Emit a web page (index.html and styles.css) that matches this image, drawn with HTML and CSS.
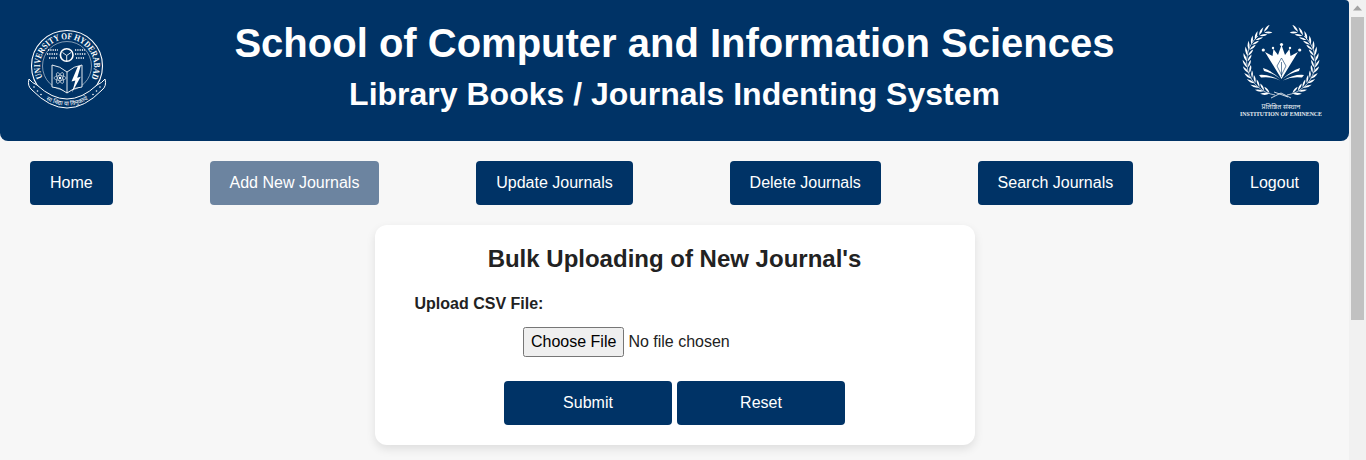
FILE: index.html
```html
<!DOCTYPE html>
<html lang="en">
<head>
  <meta charset="UTF-8" />
  <meta name="viewport" content="width=device-width, initial-scale=1.0"/>
  <title>Add New Journals</title>
  <link rel="stylesheet" href="styles.css">
</head>
<body>
  <div class="page">
    <header class="site-header">
      <!-- University seal -->
      <svg class="logo-left" viewBox="0 0 80 80" width="80" height="80" aria-label="University of Hyderabad">
        <defs>
          <path id="ring-arc" d="M14.6 48.7 A27 27 0 1 1 63.4 48.7"/>
          <path id="ribbon-arc" d="M11 66 Q39 87 67 66"/>
        </defs>
        <circle cx="39" cy="37" r="35.5" fill="none" stroke="#fff" stroke-width="1.1"/>
        <circle cx="39" cy="37" r="24.5" fill="none" stroke="#fff" stroke-width="0.5"/>
        <text class="seal-text"><textPath href="#ring-arc" textLength="109" lengthAdjust="spacingAndGlyphs">UNIVERSITY OF HYDERABAD</textPath></text>

        <circle cx="38.7" cy="26" r="6.3" fill="none" stroke="#fff" stroke-width="1.6"/>
        <path d="M34.5 23.5 L38.7 26.5 L43 23.5 M38.7 26.5 V32" fill="none" stroke="#fff" stroke-width="0.9"/>
        <path d="M20 21H30 M19 25H30 M21 29H29 M47 21H57 M47 25H58 M48 29H56" fill="none" stroke="#fff" stroke-width="1.4" stroke-dasharray="1.2 1.1"/>

        <path d="M39 43 Q32 37 24 36 V58 Q32 58 39 64 Q46 58 54 58 V36 Q46 37 39 43 Z M39 43 V64" fill="#003366" stroke="#fff" stroke-width="0.9"/>
        <g fill="none" stroke="#fff" stroke-width="0.55">
          <ellipse cx="32" cy="49" rx="6" ry="2.4"/>
          <ellipse cx="32" cy="49" rx="6" ry="2.4" transform="rotate(60 32 49)"/>
          <ellipse cx="32" cy="49" rx="6" ry="2.4" transform="rotate(120 32 49)"/>
        </g>
        <circle cx="32" cy="49" r="1.2" fill="#fff"/>
        <path d="M50 37 L43.5 52.5 L47.4 51.4 L44 63.5 L52.7 47.7 L49.2 48.7 L52.7 37 Z" fill="#fff"/>

        <path d="M1 50 Q-1 57 4 61 Q39 97 74 61 Q79 57 77 50 Q74 54 69 56 Q39 84 9 56 Q4 54 1 50 Z" fill="#003366" stroke="#fff" stroke-width="1"/>
        <text class="seal-hindi"><textPath href="#ribbon-arc" startOffset="50%" text-anchor="middle">सा विद्या या विमुक्तये</textPath></text>
        <g fill="#fff">
          <circle cx="6" cy="58" r="0.8"/><circle cx="9.5" cy="62" r="0.8"/><circle cx="13" cy="65.5" r="0.8"/>
          <circle cx="72" cy="58" r="0.8"/><circle cx="68.5" cy="62" r="0.8"/><circle cx="65" cy="65.5" r="0.8"/>
        </g>
      </svg>

      <div class="titles">
        <h1>School of Computer and Information Sciences</h1>
        <h2>Library Books / Journals Indenting System</h2>
      </div>

      <!-- Institution of Eminence mark -->
      <svg class="logo-right" viewBox="0 0 82 93" width="82" height="93" aria-label="Institution of Eminence">
        <defs>
          <g id="leaf-pair">
            <path d="M7 36.5 Q3 33.5 3.5 28 Q6.6 31.5 7 36.5 Z" fill="#fff"/>
            <path d="M7.5 36.5 Q8 32 11.5 29.5 Q11.5 33.5 7.5 36.5 Z" fill="#fff"/>
          </g>
          <g id="wreath-half">
            <path d="M35 70 A34 34 0 0 1 18 11" fill="none" stroke="#fff" stroke-width="0.7"/>
            <use href="#leaf-pair" transform="rotate(-70 41 36.5)"/>
            <use href="#leaf-pair" transform="rotate(-60 41 36.5)"/>
            <use href="#leaf-pair" transform="rotate(-50 41 36.5)"/>
            <use href="#leaf-pair" transform="rotate(-40 41 36.5)"/>
            <use href="#leaf-pair" transform="rotate(-30 41 36.5)"/>
            <use href="#leaf-pair" transform="rotate(-20 41 36.5)"/>
            <use href="#leaf-pair" transform="rotate(-10 41 36.5)"/>
            <use href="#leaf-pair" transform="rotate(0 41 36.5)"/>
            <use href="#leaf-pair" transform="rotate(10 41 36.5)"/>
            <use href="#leaf-pair" transform="rotate(20 41 36.5)"/>
            <use href="#leaf-pair" transform="rotate(30 41 36.5)"/>
            <use href="#leaf-pair" transform="rotate(40 41 36.5)"/>
            <use href="#leaf-pair" transform="rotate(50 41 36.5)"/>
            <use href="#leaf-pair" transform="rotate(60 41 36.5)"/>
          </g>
        </defs>
        <use href="#wreath-half"/>
        <use href="#wreath-half" transform="translate(82 0) scale(-1 1)"/>
        <path d="M31 73 L41 68 L51 73 M34 67 L48 72" fill="none" stroke="#fff" stroke-width="0.8"/>

        <g fill="#fff">
          <circle cx="23.3" cy="25" r="1.6"/><circle cx="33" cy="23" r="1.2"/><circle cx="41.5" cy="19.5" r="1.6"/><circle cx="50" cy="23" r="1.2"/><circle cx="59.7" cy="25" r="1.6"/>
          <path d="M25 27 L32.5 31 L33.5 24 L38 30 L41.5 20 L45 30 L49.5 24 L50.5 31 L58 27 L50 40 L41.5 54 L33 40 Z"/>
          <path d="M40.5 54 Q32 46 23 43 L24 46 Q33 48 40.5 54 Z M40 55.5 Q29 49 19 50 L21 52.5 Q31 51 40 55.5 Z"/>
          <path d="M42.5 54 Q51 46 60 43 L59 46 Q50 48 42.5 54 Z M43 55.5 Q54 49 64 50 L62 52.5 Q52 51 43 55.5 Z"/>
        </g>
        <path d="M41.5 37 V52 M41.5 33 L37 41 L41.5 50 L46 41 Z" fill="none" stroke="#003366" stroke-width="0.6"/>
        <text class="ioe-hindi" x="41" y="84" text-anchor="middle">प्रतिष्ठित संस्थान</text>
        <text class="ioe-text" x="41" y="91" text-anchor="middle" textLength="82" lengthAdjust="spacingAndGlyphs">INSTITUTION OF EMINENCE</text>
      </svg>
    </header>

    <nav class="main-nav">
      <a class="nav-btn" href="#">Home</a>
      <a class="nav-btn active" href="#">Add New Journals</a>
      <a class="nav-btn" href="#">Update Journals</a>
      <a class="nav-btn" href="#">Delete Journals</a>
      <a class="nav-btn" href="#">Search Journals</a>
      <a class="nav-btn" href="#">Logout</a>
    </nav>

    <main class="card">
      <h3>Bulk Uploading of New Journal's</h3>
      <form class="upload-form">
        <label class="field-label" for="csv">Upload CSV File:</label>
        <div class="file-row">
          <input type="file" id="csv" name="csv" accept=".csv">
        </div>
        <div class="form-actions">
          <button type="submit" class="form-btn">Submit</button>
          <button type="reset" class="form-btn">Reset</button>
        </div>
      </form>
    </main>
  </div>

  <!-- Window scrollbar -->
  <aside class="scrollbar">
    <svg class="scroll-arrow" viewBox="0 0 17 17" width="17" height="17"><path d="M8.5 5.5 L13 10.5 H4 Z" fill="#a3a3a3"/></svg>
    <div class="scroll-thumb"></div>
  </aside>
</body>
</html>
```

FILE: styles.css
```css
/* Page */
html, body {
  height: 460px;
  overflow: hidden;
}

body {
  margin: 0;
  display: flex;
  font-family: "Liberation Sans", Arial, sans-serif;
  background-color: #f7f7f7;
  color: #222;
}

.page {
  flex: 1;
  min-width: 0;
}

/* Header */
.site-header {
  display: flex;
  justify-content: space-between;
  align-items: flex-start;
  height: 141px;
  box-sizing: border-box;
  padding: 25px 27px 0 28px;
  background-color: #003366;
  color: #fff;
  border-radius: 0 4px 8px 8px;
}

.logo-left {
  margin-top: 4px;
  overflow: visible;
}

.logo-right {
  flex: none;
}

.titles {
  flex: 1;
  padding-left: 1px;
  text-align: center;
}

.titles h1 {
  margin: -6px 0 0;
  font-size: 40px;
  line-height: 48px;
}

.titles h2 {
  margin: 9px 0 0;
  font-size: 32px;
  line-height: 36px;
}

/* Logo text */
.seal-text {
  font-family: "Liberation Serif", serif;
  font-size: 9px;
  font-weight: bold;
  fill: #fff;
}

.seal-hindi {
  font-family: "Noto Sans", "DejaVu Sans", sans-serif;
  font-size: 6px;
  fill: #fff;
}

.ioe-hindi {
  font-family: "Noto Sans", "DejaVu Sans", sans-serif;
  font-size: 7px;
  fill: #e6ebf0;
}

.ioe-text {
  font-family: "Liberation Serif", serif;
  font-size: 5.5px;
  font-weight: bold;
  fill: #e6ebf0;
}

/* Navigation */
.main-nav {
  display: flex;
  justify-content: space-between;
  padding: 20px 30px;
}

.nav-btn {
  padding: 0 20px;
  line-height: 44px;
  font-size: 16px;
  color: #fff;
  text-decoration: none;
  background-color: #003366;
  border-radius: 4px;
}

.nav-btn.active {
  background-color: #6c84a0;
}

/* Upload card */
.card {
  width: 600px;
  height: 220px;
  box-sizing: border-box;
  margin: 0 auto;
  padding: 20px 40px;
  background-color: #fff;
  border-radius: 12px;
  box-shadow: 0 4px 10px rgba(0, 0, 0, 0.1);
}

.card h3 {
  margin: 0 0 22px;
  font-size: 24px;
  line-height: 28px;
  text-align: center;
}

.field-label {
  display: block;
  font-weight: bold;
  font-size: 16px;
  line-height: 18px;
}

.file-row {
  display: flex;
  justify-content: center;
  margin-top: 14px;
}

.file-row input {
  display: block;
  height: 30px;
  font-family: inherit;
  font-size: 16px;
}

.file-row input::file-selector-button {
  height: 30px;
}

.form-actions {
  display: flex;
  justify-content: center;
  gap: 5px;
  margin-top: 24px;
}

.form-btn {
  width: 168px;
  height: 44px;
  font-family: inherit;
  font-size: 16px;
  color: #fff;
  background-color: #003366;
  border: none;
  border-radius: 4px;
}

/* Scrollbar */
.scrollbar {
  flex: none;
  width: 17px;
  height: 460px;
  background-color: #f1f1f1;
}

.scroll-arrow {
  display: block;
}

.scroll-thumb {
  width: 13px;
  height: 303px;
  margin-left: 2px;
  background-color: #c1c1c1;
}
```
